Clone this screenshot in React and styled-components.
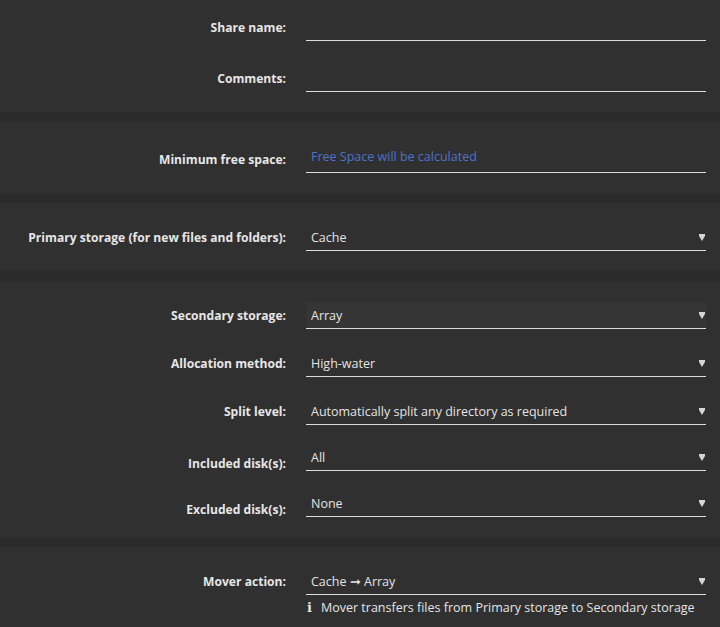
import styled, { createGlobalStyle } from "styled-components";

const GlobalStyle = createGlobalStyle`
  html, body {
    margin: 0;
    padding: 0;
    background: #2b2b2b;
  }
  body {
    font-family: "Open Sans", Lato, sans-serif;
    color: #e4e4e4;
  }
`;

const Page = styled.div`
  width: 720px;
  display: flex;
  flex-direction: column;
  gap: 10px;
`;

const Section = styled.section`
  /* one grey panel */
  display: flex;
  flex-direction: column;
  gap: ${(p) => p.$gap || 21}px;
  padding: ${(p) => p.$top || 21}px 0 20px;
  background: #303030;
`;

const Row = styled.div`
  display: grid;
  grid-template-columns: 286px 400px;
  grid-template-rows: 27px;
  column-gap: 20px;
  align-items: center;
  margin-top: ${(p) => p.$shift || 0}px;
`;

const Label = styled.label`
  text-align: right;
  font-size: 12.1px;
  line-height: 15px;
  font-weight: 700;
  color: #e6e6e6;
  padding-top: ${(p) => (p.$low ? 12 : 0)}px;
`;

const Field = styled.div`
  display: flex;
  align-items: center;
  justify-content: space-between;
  box-sizing: border-box;
  height: 27px;
  padding: 0 1px ${(p) => (p.$hint ? 6 : 0)}px 5px;
  border-bottom: 1px solid #dcdcdc;
  background: ${(p) => (p.$active ? "#353535" : "transparent")};
  font-size: 12.5px;
  color: ${(p) => (p.$hint ? "#4d72c9" : "#e4e4e4")};
`;

const Arrow = styled.svg`
  width: 6px;
  height: 7px;
  fill: #d6d6d6;
`;

const Info = styled.div`
  grid-column: 2;
  display: flex;
  align-items: center;
  gap: 9px;
  padding-top: 4px;
  font-size: 12.5px;
  line-height: 17px;
  color: #e4e4e4;
`;

const InfoMark = styled.span`
  font-family: "DejaVu Serif", serif;
  font-weight: 700;
  font-size: 13px;
  padding-left: 1px;
`;

function Select({ value, active }) {
  return (
    <Field $active={active}>
      <span>{value}</span>
      <Arrow viewBox="0 0 6 7">
        <path d="M0 0H6V2L3 7L0 2Z" />
      </Arrow>
    </Field>
  );
}

function App() {
  return (
    <>
      <GlobalStyle />
      <Page>
        <Section $top={14} $gap={24}>
          <Row>
            <Label>Share name:</Label>
            <Field />
          </Row>
          <Row>
            <Label>Comments:</Label>
            <Field />
          </Row>
        </Section>

        <Section $top={24}>
          <Row>
            <Label>Minimum free space:</Label>
            <Field $hint>Free Space will be calculated</Field>
          </Row>
        </Section>

        <Section>
          <Row>
            <Label>Primary storage (for new files and folders):</Label>
            <Select value="Cache" />
          </Row>
        </Section>

        <Section>
          <Row>
            <Label>Secondary storage:</Label>
            <Select value="Array" active />
          </Row>
          <Row>
            <Label>Allocation method:</Label>
            <Select value="High-water" />
          </Row>
          <Row>
            <Label>Split level:</Label>
            <Select value="Automatically split any directory as required" />
          </Row>
          <Row $shift={-2}>
            <Label $low>Included disk(s):</Label>
            <Select value="All" />
          </Row>
          <Row $shift={-2}>
            <Label $low>Excluded disk(s):</Label>
            <Select value="None" />
          </Row>
        </Section>

        <Section>
          <Row>
            <Label>Mover action:</Label>
            <Select value="Cache ➞ Array" />
            <Info>
              <InfoMark>i</InfoMark>
              Mover transfers files from Primary storage to Secondary storage
            </Info>
          </Row>
        </Section>
      </Page>
    </>
  );
}

export default App;
